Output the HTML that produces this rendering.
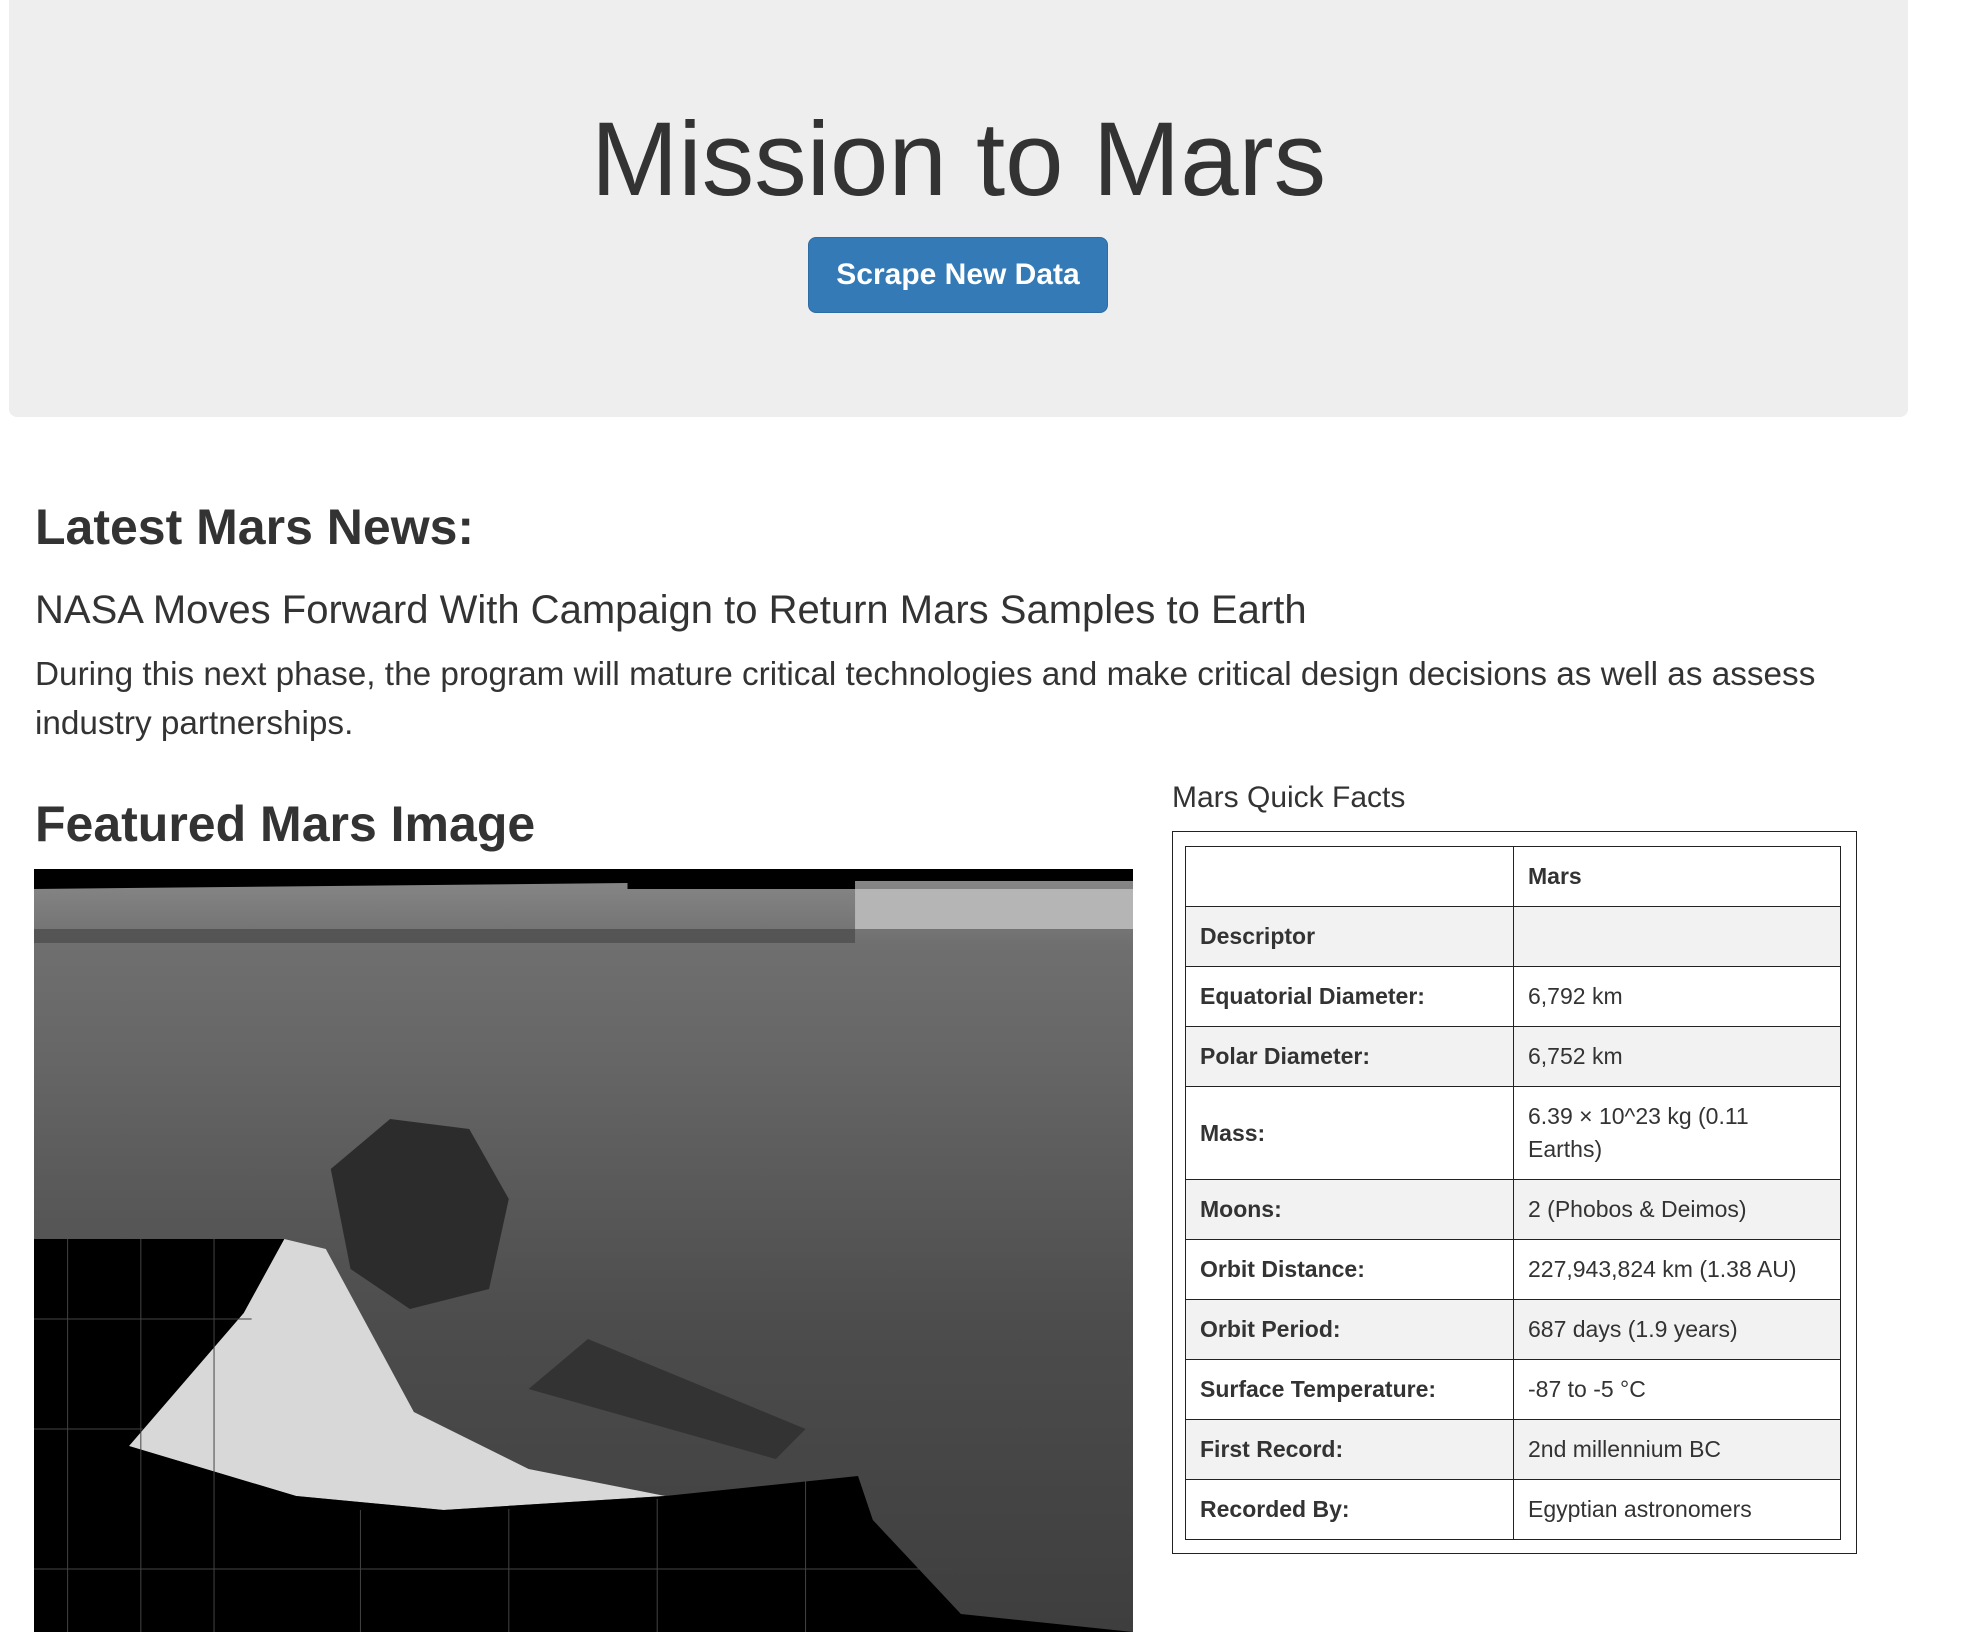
<!DOCTYPE html>
<html><head><meta charset="utf-8"><style>
*{margin:0;padding:0;box-sizing:border-box}
body{width:1972px;height:1632px;overflow:hidden;background:#fff;font-family:"Liberation Sans",Arial,sans-serif;color:#333;position:relative}
.jumbo{position:absolute;left:9px;top:-10px;width:1899px;height:427px;background:#eee;border-radius:8px}
h1{position:absolute;left:9px;width:1899px;text-align:center;top:100px;font-size:105px;font-weight:400;line-height:120px}
.btn{position:absolute;left:808px;top:237px;width:300px;height:76px;background:#337ab7;border:1px solid #2e6da4;border-radius:8px;color:#fff;font-weight:700;font-size:30px;line-height:74px;text-align:center}
.a{position:absolute;white-space:nowrap}
h2{font-size:50px;font-weight:700}
table{position:absolute;left:1185px;top:846px;width:656px;border-collapse:collapse;font-size:23px}
td,th{border:1px solid #222;padding:0 14px;height:60px;text-align:left;vertical-align:middle;line-height:33px}
td:first-child{width:328px;font-weight:700}
th{font-weight:700}
tr.g td{background:#f2f2f2}
</style></head><body>
<div class="jumbo"></div>
<h1>Mission to Mars</h1>
<div class="btn">Scrape New Data</div>
<h2 class="a" style="left:35px;top:497px;line-height:60px">Latest Mars News:</h2>
<div class="a" style="left:35px;top:586px;font-size:40px;line-height:48px">NASA Moves Forward With Campaign to Return Mars Samples to Earth</div>
<div class="a" style="left:35px;top:650px;font-size:33.3px;line-height:49px;white-space:normal;width:1860px">During this next phase, the program will mature critical technologies and make critical design decisions as well as assess industry partnerships.</div>
<h2 class="a" style="left:35px;top:794px;line-height:60px">Featured Mars Image</h2>
<svg class="a" style="left:34px;top:869px" width="1099" height="763" viewBox="0 0 1111 763" preserveAspectRatio="none">
<defs><linearGradient id="g" x1="0" y1="0" x2="0" y2="1"><stop offset="0" stop-color="#8a8a8a"/><stop offset="0.1" stop-color="#6f6f6f"/><stop offset="0.25" stop-color="#666"/><stop offset="0.6" stop-color="#4c4c4c"/><stop offset="1" stop-color="#3e3e3e"/></linearGradient></defs>
<rect width="1111" height="763" fill="url(#g)"/>
<polygon points="0,0 1111,0 1111,12 830,12 830,20 600,20 600,14 0,20" fill="#000"/>
<rect x="830" y="20" width="281" height="40" fill="#b5b5b5"/>
<rect x="0" y="60" width="830" height="14" fill="#555"/>
<polygon points="300,300 360,250 440,260 480,330 460,420 380,440 320,400" fill="#2c2c2c"/>
<polygon points="253,370 295,380 384,543 500,600 638,627 414,641 265,627 96,577 212,444" fill="#d8d8d8"/>
<polygon points="500,520 750,590 780,560 560,470" fill="#333"/>
<polygon points="0,370 253,370 212,444 96,577 265,627 414,641 638,627 833,607 848,651 937,745 1111,763 0,763" fill="#000"/>
<g stroke="#444" stroke-width="1">
<line x1="34" y1="370" x2="34" y2="763"/><line x1="108" y1="370" x2="108" y2="763"/><line x1="182" y1="370" x2="182" y2="763"/>
<line x1="0" y1="450" x2="220" y2="450"/><line x1="0" y1="560" x2="110" y2="560"/><line x1="0" y1="700" x2="930" y2="700"/>
<line x1="330" y1="641" x2="330" y2="763"/><line x1="480" y1="640" x2="480" y2="763"/><line x1="630" y1="630" x2="630" y2="763"/><line x1="780" y1="612" x2="780" y2="763"/>
</g>
</svg>
<div class="a" style="left:1172px;top:780px;font-size:30px;line-height:36px">Mars Quick Facts</div>
<div class="a" style="left:1172px;top:831px;width:685px;height:723px;border:1px solid #222"></div>
<table>
<tr><td></td><th>Mars</th></tr>
<tr class="g"><td>Descriptor</td><td></td></tr>
<tr><td>Equatorial Diameter:</td><td>6,792 km</td></tr>
<tr class="g"><td>Polar Diameter:</td><td>6,752 km</td></tr>
<tr><td style="height:93px">Mass:</td><td>6.39 × 10^23 kg (0.11<br>Earths)</td></tr>
<tr class="g"><td>Moons:</td><td>2 (Phobos &amp; Deimos)</td></tr>
<tr><td>Orbit Distance:</td><td>227,943,824 km (1.38 AU)</td></tr>
<tr class="g"><td>Orbit Period:</td><td>687 days (1.9 years)</td></tr>
<tr><td>Surface Temperature:</td><td>-87 to -5 °C</td></tr>
<tr class="g"><td>First Record:</td><td>2nd millennium BC</td></tr>
<tr><td>Recorded By:</td><td>Egyptian astronomers</td></tr>
</table>
</body></html>
